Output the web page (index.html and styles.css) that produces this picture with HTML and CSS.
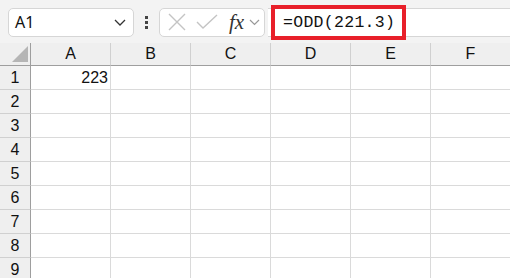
FILE: index.html
```html
<!DOCTYPE html>
<html lang="en">
<head>
    <meta charset="UTF-8">
    <title>ODD formula</title>
    <link rel="stylesheet" href="styles.css">
</head>
<body>
    <!-- Formula bar -->
    <div class="toolbar">
        <div class="name-box">
            <span>A1</span>
            <svg class="chevron" width="12" height="7" viewBox="0 0 12 7"><path d="M1 1 L6 6 L11 1" fill="none" stroke="#333" stroke-width="1.3"/></svg>
        </div>
        <div class="grip"><i></i><i></i><i></i></div>
        <div class="fx-tools">
            <svg width="18" height="18" viewBox="0 0 18 18"><path d="M1 1 L17 17 M17 1 L1 17" stroke="#c4c4c4" stroke-width="1.4"/></svg>
            <svg width="22" height="16" viewBox="0 0 22 16"><path d="M1 8 L7 14 L21 1" fill="none" stroke="#c4c4c4" stroke-width="1.4"/></svg>
            <span class="fx">fx</span>
            <svg class="small-chevron" width="11" height="7" viewBox="0 0 11 7"><path d="M1 1 L5.5 5.5 L10 1" fill="none" stroke="#999" stroke-width="1.2"/></svg>
        </div>
        <div class="formula">
            <span class="formula-text">=ODD(221.3)</span>
            <div class="highlight"></div>
        </div>
    </div>

    <!-- Sheet -->
    <div class="sheet">
        <div class="corner"><div class="triangle"></div></div>
        <div class="col-head">A</div>
        <div class="col-head">B</div>
        <div class="col-head">C</div>
        <div class="col-head">D</div>
        <div class="col-head">E</div>
        <div class="col-head">F</div>

        <div class="row-head">1</div>
        <div class="cell num">223</div><div class="cell"></div><div class="cell"></div><div class="cell"></div><div class="cell"></div><div class="cell"></div>
        <div class="row-head">2</div>
        <div class="cell"></div><div class="cell"></div><div class="cell"></div><div class="cell"></div><div class="cell"></div><div class="cell"></div>
        <div class="row-head">3</div>
        <div class="cell"></div><div class="cell"></div><div class="cell"></div><div class="cell"></div><div class="cell"></div><div class="cell"></div>
        <div class="row-head">4</div>
        <div class="cell"></div><div class="cell"></div><div class="cell"></div><div class="cell"></div><div class="cell"></div><div class="cell"></div>
        <div class="row-head">5</div>
        <div class="cell"></div><div class="cell"></div><div class="cell"></div><div class="cell"></div><div class="cell"></div><div class="cell"></div>
        <div class="row-head">6</div>
        <div class="cell"></div><div class="cell"></div><div class="cell"></div><div class="cell"></div><div class="cell"></div><div class="cell"></div>
        <div class="row-head">7</div>
        <div class="cell"></div><div class="cell"></div><div class="cell"></div><div class="cell"></div><div class="cell"></div><div class="cell"></div>
        <div class="row-head">8</div>
        <div class="cell"></div><div class="cell"></div><div class="cell"></div><div class="cell"></div><div class="cell"></div><div class="cell"></div>
        <div class="row-head">9</div>
        <div class="cell"></div><div class="cell"></div><div class="cell"></div><div class="cell"></div><div class="cell"></div><div class="cell"></div>
    </div>
</body>
</html>
```

FILE: styles.css
```css
* {
    margin: 0;
    padding: 0;
    box-sizing: border-box;
}

body {
    background: #f3f3f3;
    font-family: "Liberation Sans", Arial, sans-serif;
    color: #111;
    width: 510px;
    height: 278px;
    overflow: hidden;
}

/* Formula bar */
.toolbar {
    display: flex;
    align-items: center;
    height: 43px;
    padding: 5px 0 4px 8px;
}

.name-box {
    display: flex;
    align-items: center;
    justify-content: space-between;
    width: 126px;
    height: 29px;
    padding: 0 7px 0 6px;
    background: #fff;
    border: 1px solid #d6d6d6;
    border-radius: 5px;
    font-family: "Noto Sans", sans-serif;
    font-size: 16px;
}

.grip {
    display: flex;
    flex-direction: column;
    gap: 2px;
    margin: 0 11px 0 11px;
}

.grip i {
    display: block;
    width: 3px;
    height: 3px;
    background: #444;
}

.fx-tools {
    display: flex;
    align-items: center;
    width: 106px;
    height: 29px;
    padding-left: 8px;
    background: #fff;
    border: 1px solid #d6d6d6;
    border-radius: 5px;
}

.fx-tools svg:nth-child(2) {
    margin-left: 10px;
}

.fx {
    margin-left: 11px;
    font-family: "Liberation Serif", serif;
    font-style: italic;
    font-size: 21px;
    color: #333;
}

.small-chevron {
    margin-left: 5px;
}

.formula {
    position: relative;
    flex: 1;
    height: 29px;
    margin-left: 3px;
    background: #fff;
    border-top: 1px solid #d6d6d6;
    border-bottom: 1px solid #d6d6d6;
    display: flex;
    align-items: center;
    padding-left: 15px;
}

.formula-text {
    font-family: "Liberation Mono", monospace;
    font-size: 16.5px;
    letter-spacing: 0.3px;
    color: #111;
}

.highlight {
    position: absolute;
    left: 3px;
    top: -4px;
    width: 135px;
    height: 35px;
    border: 4px solid #e8202a;
}

/* Sheet grid */
.sheet {
    display: grid;
    grid-template-columns: 31px repeat(6, 80px);
    grid-template-rows: 23px repeat(9, 24px);
    background: #fff;
    font-size: 16px;
}

.corner {
    position: relative;
    background: #efefef;
    border-right: 1px solid #9e9e9e;
    border-bottom: 1px solid #9e9e9e;
}

.triangle {
    position: absolute;
    right: 2px;
    bottom: 3px;
    width: 0;
    height: 0;
    border-left: 16px solid transparent;
    border-bottom: 16px solid #b5b5b5;
}

.col-head {
    background: #efefef;
    border-right: 1px solid #d0d0d0;
    border-bottom: 1px solid #9e9e9e;
    text-align: center;
    line-height: 22px;
}

.row-head {
    background: #efefef;
    border-right: 1px solid #9e9e9e;
    border-bottom: 1px solid #d0d0d0;
    text-align: center;
    line-height: 23px;
}

.cell {
    border-right: 1px solid #dadada;
    border-bottom: 1px solid #dadada;
    line-height: 23px;
    padding: 0 2px;
}

.num {
    text-align: right;
}
```
